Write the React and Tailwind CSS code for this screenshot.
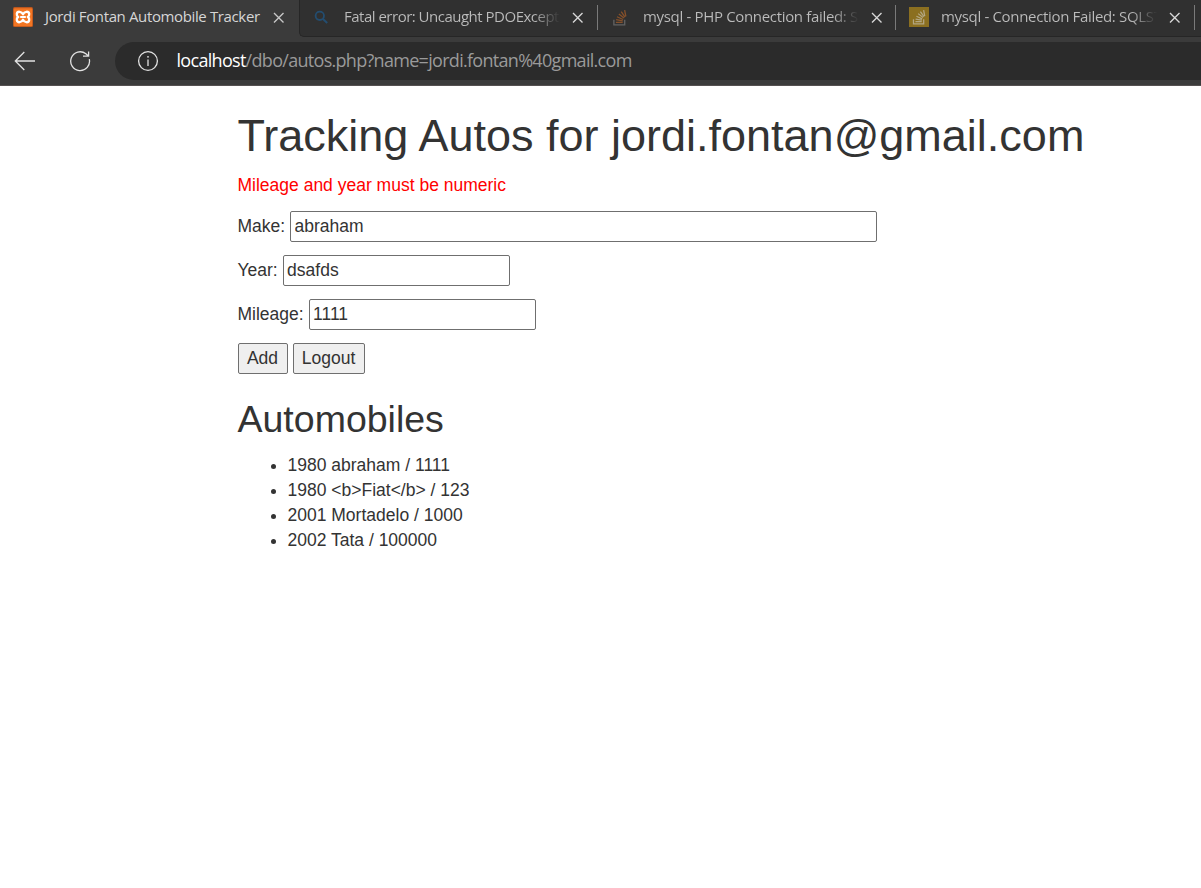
import React from "react";

const closePath = "M1 1L10.5 10.5M10.5 1L1 10.5";

function CloseIcon({ className }) {
  return (
    <svg viewBox="0 0 11.5 11.5" className={`h-[11.5px] w-[11.5px] shrink-0 ${className}`} fill="none" stroke="currentColor" strokeWidth="1.35">
      <path d={closePath} />
    </svg>
  );
}

function XamppIcon() {
  return (
    <svg viewBox="0 0 20 20" className="h-5 w-5 shrink-0">
      <rect width="20" height="20" rx="1.5" fill="#b9561f" />
      <rect x="0.8" y="1.2" width="18.4" height="18" rx="1" fill="#f37623" />
      <g fill="none" stroke="#fff" strokeWidth="2.3" strokeLinejoin="round">
        <path d="M10 7.2C8.8 4.3 4.2 3.7 3.8 7C3.6 8.6 4.3 9.4 5.2 10C4.2 10.7 3.5 11.5 3.8 13C4.4 16.3 8.8 15.7 10 12.8C11.2 15.7 15.6 16.3 16.2 13C16.5 11.5 15.8 10.7 14.8 10C15.7 9.4 16.4 8.6 16.2 7C15.8 3.7 11.2 4.3 10 7.2Z" />
        <path d="M7.2 10H12.8" strokeWidth="2" />
      </g>
    </svg>
  );
}

function SearchIcon() {
  return (
    <svg viewBox="0 0 20 20" className="h-5 w-5 shrink-0" fill="none" stroke="#234d70">
      <circle cx="8.8" cy="8.8" r="4.2" strokeWidth="1.8" />
      <path d="M12 12L16.2 16" strokeWidth="2" />
    </svg>
  );
}

function StackIcon({ tray, bars, small }) {
  return (
    <svg viewBox="0 0 16 18" className={small ? "h-[16px] w-[14.5px]" : "h-[17px] w-[16px]"} fill="none" strokeWidth="1.4">
      <path d="M1.5 11.5V16.8H13V11.5" stroke={tray} />
      <path d="M3.7 14.2H10.8M3.9 11.3L10.9 12.6M4.8 8.2L11.3 11.1M6.8 5.2L12.2 9.6M9.3 2.9L13.3 8.5M12.9 1.2L14.2 7.9" stroke={bars} />
    </svg>
  );
}

function Tab({ icon, title, className, tracking = "tracking-[-0.33px]", gap = "ml-[13px]" }) {
  return (
    <div className={`flex h-[34px] shrink-0 items-center ${className}`}>
      <div className="flex w-5 shrink-0 justify-center">{icon}</div>
      <div className={`mb-[2px] w-[216px] shrink-0 overflow-hidden whitespace-nowrap bg-gradient-to-r from-[#bcbcbc] from-88% to-[#303030] to-100% bg-clip-text text-[15px] leading-[22px] text-transparent ${tracking} ${gap}`}>
        {title}
      </div>
      <CloseIcon className="ml-[12px] mt-[2px] text-[#d8d8d8]" />
    </div>
  );
}

function Divider() {
  return <div className="mt-[5px] h-[25px] w-px shrink-0 bg-[#7a7a7a]" />;
}

function Browser() {
  return (
    <header className="h-[86px] overflow-hidden border-b border-[#555151] bg-[#3b3b3b] font-['Open_Sans',sans-serif]">
      <div className="flex h-[37px] w-[1210px]">
        <div className="flex h-[34px] w-[299px] shrink-0 items-center">
          <div className="ml-[13px]"><XamppIcon /></div>
          <div className="mb-[2px] ml-[12px] w-[215px] whitespace-nowrap text-[15px] leading-[22px] tracking-[-0.37px] text-[#d6d6d6]">
            Jordi Fontan Automobile Tracker
          </div>
          <CloseIcon className="ml-[13px] mt-[2px] text-[#c8c8c8]" />
        </div>
        <div className="flex h-[37px] grow rounded-bl-[5px] border-b border-l border-[#262626] bg-[#303030]">
          <Tab className="w-[297px] pl-[11px]" tracking="tracking-[-0.5px]" title="Fatal error: Uncaught PDOException" icon={<SearchIcon />} />
          <Divider />
          <Tab className="w-[297px] pl-[12px]" title="mysql - PHP Connection failed: SQLSTATE" icon={<StackIcon tray="#626262" bars="#85502a" />} />
          <Divider />
          <Tab
            className="w-[298px] pl-[13px]"
            gap="ml-[12px]"
            title="mysql - Connection Failed: SQLSTATE"
            icon={
              <span className="flex h-5 w-5 items-center justify-center bg-[#8b6f20]">
                <StackIcon small tray="#b3a783" bars="#b3a783" />
              </span>
            }
          />
          <Divider />
        </div>
      </div>
      <div className="flex h-[48px] items-center">
        <svg viewBox="0 0 22 20" className="ml-[14px] h-5 w-[22px] shrink-0" fill="none" stroke="#e2e2e2" strokeWidth="1.3">
          <path d="M10.3 1L1.3 10L10.3 19M1.3 10H21" />
        </svg>
        <svg viewBox="0 0 22 22" className="ml-[33px] h-[22px] w-[22px] shrink-0" fill="none" stroke="#e2e2e2" strokeWidth="1.3">
          <path d="M20.3 9.2A9.4 9.4 0 1 1 16.9 3.8L19.4 6M19.6 1.4V6.2H14" />
        </svg>
        <div className="ml-[24px] flex h-[38px] grow items-center rounded-l-full bg-[#2b2b2b]">
          <svg viewBox="0 0 22 22" className="ml-[21.5px] h-[22px] w-[22px] shrink-0" fill="none" stroke="#e2e2e2" strokeWidth="1.3">
            <circle cx="11" cy="11" r="9.4" />
            <path d="M11 9.5V16" />
            <circle cx="11" cy="6.8" r="0.9" fill="#e2e2e2" stroke="none" />
          </svg>
          <div className="mb-[2px] ml-[18px] whitespace-nowrap text-[18px] leading-[25px] tracking-[-0.7px] text-[#9a9a9a]">
            <span className="text-white">localhost</span>/dbo/autos.php?name=jordi.fontan%40gmail.com
          </div>
        </div>
      </div>
    </header>
  );
}

function Field({ label, value, width }) {
  return (
    <label className="mb-[13px] flex h-[31px] items-center whitespace-pre">
      {label + " "}
      <input
        defaultValue={value}
        className={`h-[31px] rounded-[2px] border border-[#6f6f6f] bg-white px-[3.5px] pb-[3px] pt-[2px] outline-none ${width}`}
      />
    </label>
  );
}

const autos = ["1980 abraham / 1111", "1980 <b>Fiat</b> / 123", "2001 Mortadelo / 1000", "2002 Tata / 100000"];

export default function App() {
  return (
    <div className="h-[888px] overflow-hidden bg-white">
      <Browser />
      <main className="ml-[237.5px] pt-[25px] font-['Liberation_Sans',Arial,sans-serif] text-[17.5px] leading-[25px] text-[#333333]">
        <h1 className="mb-[12.5px] whitespace-nowrap text-[45px] leading-[49.5px]">Tracking Autos for jordi.fontan@gmail.com</h1>
        <p className="mb-[13px] text-[#ff0000]">Mileage and year must be numeric</p>
        <form onSubmit={(e) => e.preventDefault()}>
          <Field label="Make:" value="abraham" width="w-[587px]" />
          <Field label="Year:" value="dsafds" width="w-[227px]" />
          <Field label="Mileage:" value="1111" width="w-[227px]" />
          <div className="flex gap-[5px]">
            <button className="h-[31px] w-[50px] rounded-[2px] border border-[#6f6f6f] bg-[#efefef]">Add</button>
            <button className="h-[31px] w-[72px] rounded-[2px] border border-[#6f6f6f] bg-[#efefef]">Logout</button>
          </div>
        </form>
        <h2 className="mb-[12.5px] mt-[25px] text-[37.5px] leading-[41.25px]">Automobiles</h2>
        <ul className="list-disc pl-[50px]">
          {autos.map((a) => (
            <li key={a}>{a}</li>
          ))}
        </ul>
      </main>
    </div>
  );
}
